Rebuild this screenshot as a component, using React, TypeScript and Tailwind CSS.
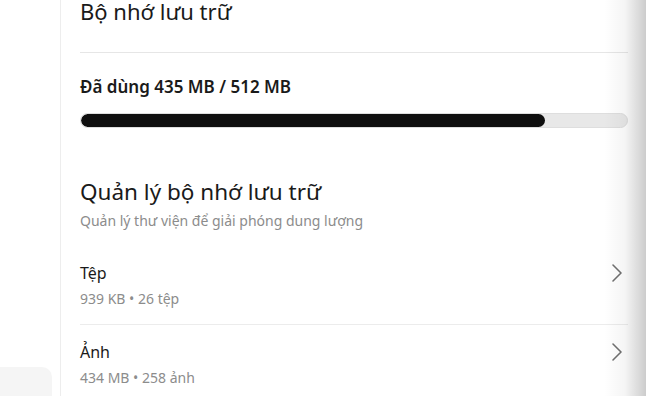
import { ChevronRight } from "lucide-react";

const items = [
  { name: "Tệp", meta: "939 KB • 26 tệp" },
  { name: "Ảnh", meta: "434 MB • 258 ảnh" },
];

export default function App() {
  const used = 435;
  const total = 512;
  return (
    <div
      className="relative flex h-[396px] w-[646px] overflow-hidden bg-white text-[#1a1a1a]"
      style={{ fontFamily: '"Noto Sans", "Open Sans", sans-serif' }}
    >
      {/* sidebar */}
      <aside className="flex w-[61px] shrink-0 flex-col justify-end border-r border-[#ededed]">
        <div className="h-[29px] w-[52px] rounded-tr-[10px] bg-[#f5f5f5]" />
      </aside>

      <main className="flex-1 pl-[19px] pr-[18px]">
        <h1 className="-mt-[5px] text-[22px] leading-[32px] font-normal">Bộ nhớ lưu trữ</h1>

        <div className="mt-[25px] border-t border-[#e6e6e6]" />

        <p className="mt-[22px] text-[17px] leading-[24px] font-semibold">
          Đã dùng {used} MB / {total} MB
        </p>
        <div className="mt-[14px] h-[15px] w-full overflow-hidden rounded-full border border-[#dedede] bg-[#e8e8e8]">
          <div
            className="h-full rounded-full bg-[#0f0f0f]"
            style={{ width: `${(used / total) * 100}%` }}
          />
        </div>

        <h2 className="mt-[48px] text-[22.5px] leading-[32px] font-normal">Quản lý bộ nhớ lưu trữ</h2>
        <p className="mt-[2px] text-[14px] leading-[22px] text-[#8c8c8c]">
          Quản lý thư viện để giải phóng dung lượng
        </p>

        <ul className="mt-[14px]">
          {items.map((it, i) => (
            <li
              key={it.name}
              className={
                "flex items-center justify-between py-[14px] " +
                (i > 0 ? "border-t border-[#ececec]" : "")
              }
            >
              <div>
                <div className="text-[16px] leading-[26px]">{it.name}</div>
                <div className="mt-[2px] text-[14px] leading-[22px] text-[#8c8c8c]">{it.meta}</div>
              </div>
              <ChevronRight className="-mr-[5px] -mt-[24px] h-[32px] w-[32px] text-[#707070]" strokeWidth={1.2} />
            </li>
          ))}
        </ul>
      </main>

      {/* shadow of overlaying panel */}
      <div className="pointer-events-none absolute right-0 top-0 h-full w-[42px] bg-gradient-to-l from-black/20 via-black/[0.04] to-transparent" />
    </div>
  );
}
